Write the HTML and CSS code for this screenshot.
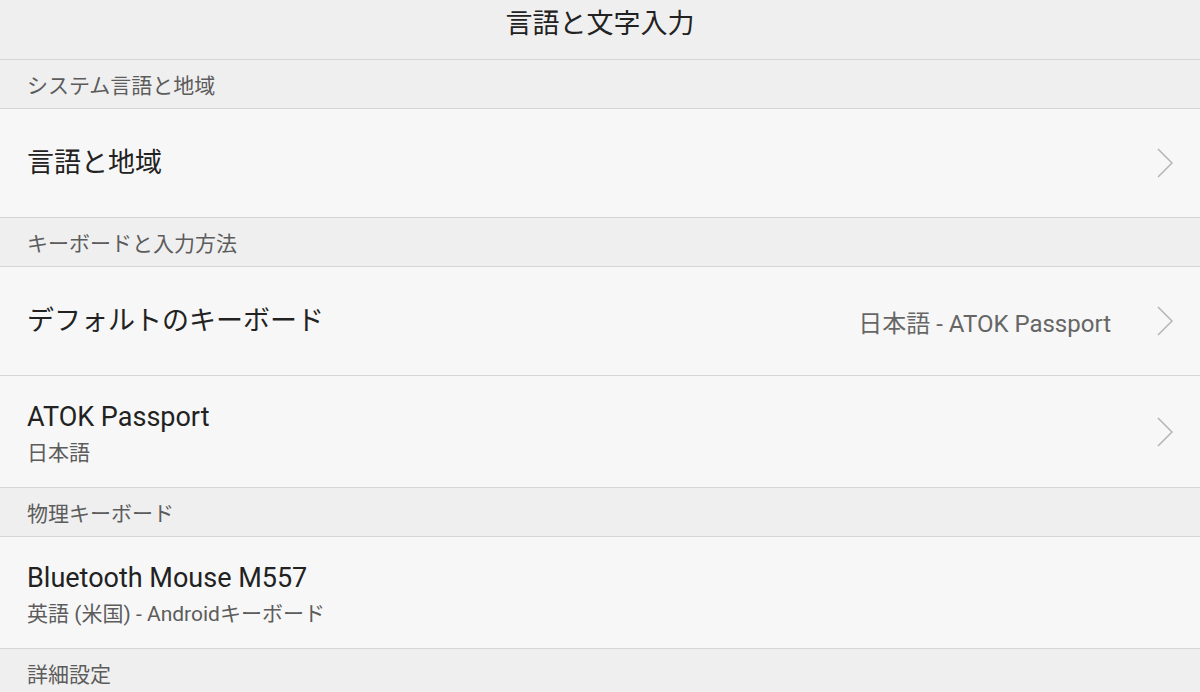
FILE: index.html
```html
<!DOCTYPE html>
<html lang="ja">
<head>
    <meta charset="UTF-8">
    <meta name="viewport" content="width=device-width, initial-scale=1.0">
    <title>言語と文字入力</title>
    <link rel="stylesheet" href="styles.css">
</head>
<body>
    <header class="title-bar">
        <h1>言語と文字入力</h1>
    </header>

    <main class="settings">
        <div class="group-label">システム言語と地域</div>
        <div class="row">
            <div class="row-text">
                <div class="row-title">言語と地域</div>
            </div>
            <svg class="chevron" viewBox="0 0 16 30"><polyline points="1,1 15,15 1,29"/></svg>
        </div>

        <div class="group-label">キーボードと入力方法</div>
        <div class="row">
            <div class="row-text">
                <div class="row-title">デフォルトのキーボード</div>
            </div>
            <span class="row-value">日本語 - ATOK Passport</span>
            <svg class="chevron" viewBox="0 0 16 30"><polyline points="1,1 15,15 1,29"/></svg>
        </div>
        <div class="row two-line">
            <div class="row-text">
                <div class="row-title">ATOK Passport</div>
                <div class="row-summary">日本語</div>
            </div>
            <svg class="chevron" viewBox="0 0 16 30"><polyline points="1,1 15,15 1,29"/></svg>
        </div>

        <div class="group-label">物理キーボード</div>
        <div class="row two-line">
            <div class="row-text">
                <div class="row-title">Bluetooth Mouse M557</div>
                <div class="row-summary">英語 (米国) - Androidキーボード</div>
            </div>
        </div>

        <div class="group-label">詳細設定</div>
    </main>
</body>
</html>
```

FILE: styles.css
```css
:root {
    --bar-color: #efefef;
    --row-color: #f7f7f7;
    --line-color: #d6d6d6;
    --text-color: #222;
    --muted-color: #5c5c5c;
}

body {
    font-family: Roboto, "Noto Sans CJK JP", sans-serif;
    margin: 0;
    padding: 0;
    background-color: var(--row-color);
    color: var(--text-color);
}

.title-bar {
    height: 59px;
    background-color: var(--bar-color);
    border-bottom: 1px solid var(--line-color);
    display: flex;
    justify-content: center;
}

h1 {
    margin: 0;
    padding-top: 11px;
    font-size: 27px;
    line-height: 27px;
    font-weight: 400;
}

.group-label {
    height: 48px;
    padding: 0 27px;
    display: flex;
    align-items: center;
    background-color: var(--bar-color);
    border-bottom: 1px solid var(--line-color);
    color: var(--muted-color);
    font-size: 21px;
}

.row {
    min-height: 108px;
    padding: 0 27px;
    display: flex;
    align-items: center;
    border-bottom: 1px solid var(--line-color);
}

.row.two-line {
    min-height: 111px;
}

.row-text {
    flex: 1;
}

.row-title {
    font-size: 27px;
    line-height: 42px;
}

.row-summary {
    font-size: 21px;
    line-height: 30px;
    color: var(--muted-color);
}

.row-value {
    margin-right: 46px;
    font-size: 24px;
    color: #666;
}

.chevron {
    width: 16px;
    height: 30px;
    fill: none;
    stroke: #b4b4b4;
    stroke-width: 1.5;
}
```
